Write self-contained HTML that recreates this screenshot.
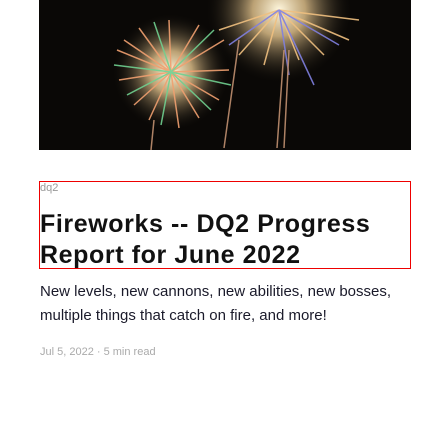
<!DOCTYPE html>
<html><head><style>
body{margin:0;background:#fff;font-family:"Liberation Sans",sans-serif;}
.img{position:absolute;left:39px;top:0;width:372px;height:150px;background:#0a0806;overflow:hidden}
.box{position:absolute;left:39px;top:181px;width:370px;height:86px;border:1px solid #e00;}
.tag{position:absolute;left:0;top:0;font-size:11px;color:#999;line-height:12px}
h1{position:absolute;left:0;top:27px;margin:0;font-size:25px;line-height:31px;font-weight:bold;color:#111;width:370px;letter-spacing:0.6px}
.desc{position:absolute;left:40px;top:280px;font-size:15px;line-height:24px;color:#1a1a2a;width:368px}
.meta{position:absolute;left:40px;top:346px;font-size:11px;color:#aaa}
</style></head><body>
<div class="img"><svg width="372" height="150" viewBox="0 0 372 150">
<defs><radialGradient id="g1"><stop offset="0" stop-color="#fff8e0"/><stop offset="0.35" stop-color="#e8c890" stop-opacity="0.8"/><stop offset="1" stop-color="#000" stop-opacity="0"/></radialGradient></defs>
<circle cx="132" cy="72" r="60" fill="url(#g1)"/>
<circle cx="240" cy="10" r="75" fill="url(#g1)"/>
<g stroke-width="1.5" fill="none" opacity="0.9">
<path d="M132 72 L78 50 M132 72 L80 80 M132 72 L95 105 M132 72 L110 120 M132 72 L140 128 M132 72 L160 118 M132 72 L180 100 M132 72 L190 70 M132 72 L185 40 M132 72 L160 25 M132 72 L130 20 M132 72 L100 28 M132 72 L85 40" stroke="#f0a070"/>
<path d="M132 72 L75 65 M132 72 L88 95 M132 72 L122 125 M132 72 L172 110 M132 72 L192 85 M132 72 L175 30 M132 72 L115 22" stroke="#70d090"/>
<path d="M240 10 L180 30 M240 10 L200 55 M240 10 L225 65 M240 10 L260 60 M240 10 L285 55 M240 10 L310 40 M240 10 L320 20" stroke="#f0c080"/>
<path d="M240 10 L190 45 M240 10 L250 75 M240 10 L275 85 M240 10 L300 45" stroke="#8080e0"/>
<path d="M200 40 L185 148 M245 50 L238 148 M250 50 L245 148 M115 120 L112 150" stroke="#c09070"/>
</g></svg></div>
<div class="box"><div class="tag">dq2</div><h1>Fireworks -- DQ2 Progress Report for June 2022</h1></div>
<div class="desc">New levels, new cannons, new abilities, new bosses, multiple things that catch on fire, and more!</div>
<div class="meta">Jul 5, 2022 · 5 min read</div>
</body></html>
